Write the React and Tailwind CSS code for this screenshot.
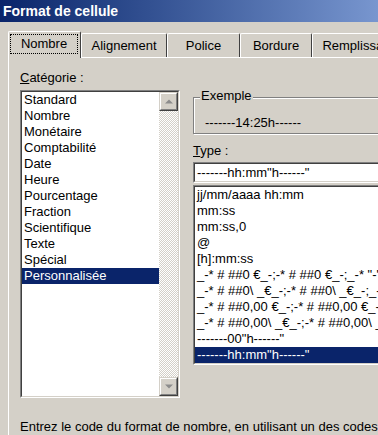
import React from 'react';

const categories = [
  'Standard', 'Nombre', 'Monétaire', 'Comptabilité', 'Date', 'Heure',
  'Pourcentage', 'Fraction', 'Scientifique', 'Texte', 'Spécial', 'Personnalisée',
];

const types = [
  'jj/mm/aaaa hh:mm',
  'mm:ss',
  'mm:ss,0',
  '@',
  '[h]:mm:ss',
  '_-* # ##0 €_-;-* # ##0 €_-;_-* "-" €_-;_-@_-',
  '_-* # ##0\\ _€_-;-* # ##0\\ _€_-;_-* "-"\\ _€_-;_-@_-',
  '_-* # ##0,00 €_-;-* # ##0,00 €_-;_-* "-"?? €_-;_-@_-',
  '_-* # ##0,00\\ _€_-;-* # ##0,00\\ _€_-;_-* "-"??\\ _€_-;_-@_-',
  '-------00"h------"',
  '-------hh:mm"h------"',
];

const tabs = [
  { label: 'Alignement', w: 'w-[86px]' },
  { label: 'Police', w: 'w-[73px]' },
  { label: 'Bordure', w: 'w-[72px]' },
  { label: 'Remplissage', w: 'w-[96px]' },
];

// sunken 3D frame (classic windows)
function Sunken({ className = '', children }) {
  return (
    <div className={`border border-t-[#808080] border-l-[#808080] border-r-white border-b-white ${className}`}>
      <div className="border border-t-[#404040] border-l-[#404040] border-r-[#d4d0c8] border-b-[#d4d0c8] bg-white h-full">
        {children}
      </div>
    </div>
  );
}

function ScrollButton({ up }) {
  return (
    <div className="w-[19px] h-[19px] border border-t-[#d4d0c8] border-l-[#d4d0c8] border-r-[#404040] border-b-[#404040] flex-shrink-0">
      <div className="w-full h-full border border-t-white border-l-white border-r-[#808080] border-b-[#808080] bg-[#d4d0c8] flex items-center justify-center">
        <svg width="8" height="5" viewBox="0 0 8 5">
          {up ? <polygon points="0,4.5 8,4.5 4,0.5" fill="#8c8c8c" /> : <polygon points="0,0.5 8,0.5 4,4.5" fill="#8c8c8c" />}
        </svg>
      </div>
    </div>
  );
}

export default function App() {
  return (
    <div className="w-[378px] h-[435px] overflow-hidden bg-[#d4d0c8] text-black text-[13px] leading-[16px] font-['Liberation_Sans',Arial,sans-serif]">
      {/* Title bar */}
      <div className="h-[22px] flex items-center pl-[3px] bg-gradient-to-r from-[#0a246a] to-[#7896cf] text-white font-bold text-[14px]">
        Format de cellule
      </div>

      {/* Tabs */}
      <div className="h-[35px] flex items-end pl-[8px]">
        <div className="relative z-10 w-[73px] h-[27px] flex-shrink-0 -mb-px bg-[#d4d0c8] border-t border-l border-white border-r border-r-[#404040] rounded-t-[2px] pt-[2px] pl-[1px] pr-[2px] pb-[4px]">
          <div className="h-full border border-dotted border-black flex items-center justify-center">
            Nombre
          </div>
        </div>
        {tabs.map(t => (
          <div key={t.label} className={`${t.w} h-[24px] flex-shrink-0 border-t border-l border-white border-r border-r-[#404040] rounded-t-[2px] flex items-center justify-center whitespace-nowrap`}>
            {t.label}
          </div>
        ))}
      </div>

      {/* Panel */}
      <div className="ml-[8px] border-t border-l border-white pt-[12px] pl-[11px]">
        <div className="flex gap-[13px]">
          {/* Category column */}
          <div className="w-[160px] flex-shrink-0">
            <div><u>C</u>atégorie :</div>
            <Sunken className="mt-[4px] h-[308px]">
              <div className="flex h-full">
                <div className="flex-1 min-w-0">
                  {categories.map((c, i) => (
                    <div key={c} className={`pl-[2px] h-[16px] whitespace-nowrap ${i === categories.length - 1 ? 'bg-[#0a246a] text-white' : ''}`}>
                      {c}
                    </div>
                  ))}
                </div>
                <div className="w-[19px] flex flex-col">
                  <ScrollButton up />
                  <div className="flex-1 bg-[repeating-conic-gradient(#d4d0c8_0%_25%,#ffffff_0%_50%)] bg-[length:2px_2px]" />
                  <ScrollButton />
                </div>
              </div>
            </Sunken>
          </div>

          {/* Right column */}
          <div className="w-[230px] flex-shrink-0 pt-[18px]">
            <div className="relative pt-[9px]">
              <div className="h-[37px] border border-[#808080] shadow-[inset_1px_1px_0_#ffffff,1px_1px_0_#ffffff] pl-[11px] pt-[17px] whitespace-nowrap">
                -------14:25h------
              </div>
              <span className="absolute left-[7px] top-0 px-px bg-[#d4d0c8]">Exemple</span>
            </div>
            <div className="mt-[9px]"><u>T</u>ype :</div>
            <Sunken className="mt-[3px] h-[21px]">
              <div className="pl-[2px] pt-px whitespace-nowrap">-------hh:mm"h------"</div>
            </Sunken>
            <Sunken className="mt-[2px] h-[180px]">
              <div className="overflow-hidden">
                {types.map((t, i) => (
                  <div key={t} className={`pl-[2px] h-[16px] whitespace-pre ${i === types.length - 1 ? 'bg-[#0a246a] text-white' : ''}`}>
                    {t}
                  </div>
                ))}
              </div>
            </Sunken>
          </div>
        </div>

        <div className="mt-[21px] whitespace-nowrap">
          Entrez le code du format de nombre, en utilisant un des codes existants comme point de départ.
        </div>
      </div>
    </div>
  );
}
